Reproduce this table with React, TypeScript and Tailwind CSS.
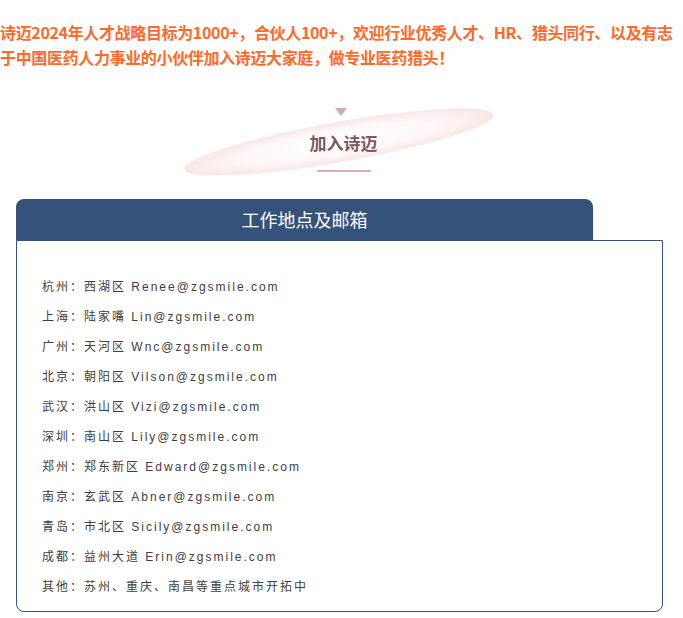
import React from "react";

const rows: string[] = [
  "杭州：西湖区 Renee@zgsmile.com",
  "上海：陆家嘴 Lin@zgsmile.com",
  "广州：天河区 Wnc@zgsmile.com",
  "北京：朝阳区 Vilson@zgsmile.com",
  "武汉：洪山区 Vizi@zgsmile.com",
  "深圳：南山区 Lily@zgsmile.com",
  "郑州：郑东新区 Edward@zgsmile.com",
  "南京：玄武区 Abner@zgsmile.com",
  "青岛：市北区 Sicily@zgsmile.com",
  "成都：益州大道 Erin@zgsmile.com",
  "其他：苏州、重庆、南昌等重点城市开拓中",
];

export default function App() {
  return (
    <div className="w-[683px] min-h-[618px] bg-white [font-family:'Liberation_Sans','Noto_Sans_CJK_SC',sans-serif]">
      <div className="pt-[20px] text-[16px] leading-[25px] font-bold tracking-[-0.35px] text-[#ff6a2b] [font-family:'Noto_Sans_CJK_SC','Liberation_Sans',sans-serif]">
        <div className="whitespace-nowrap">诗迈2024年人才战略目标为1000+，合伙人100+，欢迎行业优秀人才、HR、猎头同行、以及有志</div>
        <div className="whitespace-nowrap">于中国医药人力事业的小伙伴加入诗迈大家庭，做专业医药猎头！</div>
      </div>

      <div className="relative flex flex-col items-center pt-[38px]">
        <svg
          className="absolute left-[174px] top-[22px]"
          width="330"
          height="100"
          viewBox="0 0 330 100"
        >
          <defs>
            <radialGradient id="eg" cx="0.5" cy="0.5" r="0.5">
              <stop offset="0" stopColor="#ffffff" />
              <stop offset="0.6" stopColor="#fef8f8" />
              <stop offset="1" stopColor="#f9e7e7" />
            </radialGradient>
          </defs>
          <ellipse cx="165" cy="50" rx="157" ry="20" fill="url(#eg)" transform="rotate(-10 165 50)" />
        </svg>
        <svg className="relative ml-[-2px]" width="12" height="8" viewBox="0 0 12 8">
          <polygon points="0,0 12,0 6,8" fill="#d9a9a9" />
        </svg>
        <div className="relative mt-[15px] ml-[4px] text-[17px] leading-[24px] font-bold text-[#7a5a5c] [font-family:'Noto_Sans_CJK_SC',sans-serif]">
          加入诗迈
        </div>
        <div className="relative mt-[15px] ml-[5px] w-[54px] h-[2px] bg-[#dcb0b0]" />
      </div>

      <div className="mx-[16px] mt-[27px] w-[647px]">
        <div className="w-[577px] h-[41px] rounded-t-[8px] bg-[#34527a] flex items-center justify-center text-white text-[18px] [font-family:'Noto_Sans_CJK_SC',sans-serif]">
          工作地点及邮箱
        </div>
        <div className="border border-[#34527a] rounded-b-[8px] pl-[25px] pt-[31px] pb-[9px]">
          {rows.map((r) => (
            <div key={r} className="h-[30px] leading-[30px] text-[12px] tracking-[2px] text-[#404040] whitespace-nowrap">
              {r}
            </div>
          ))}
        </div>
      </div>
    </div>
  );
}
